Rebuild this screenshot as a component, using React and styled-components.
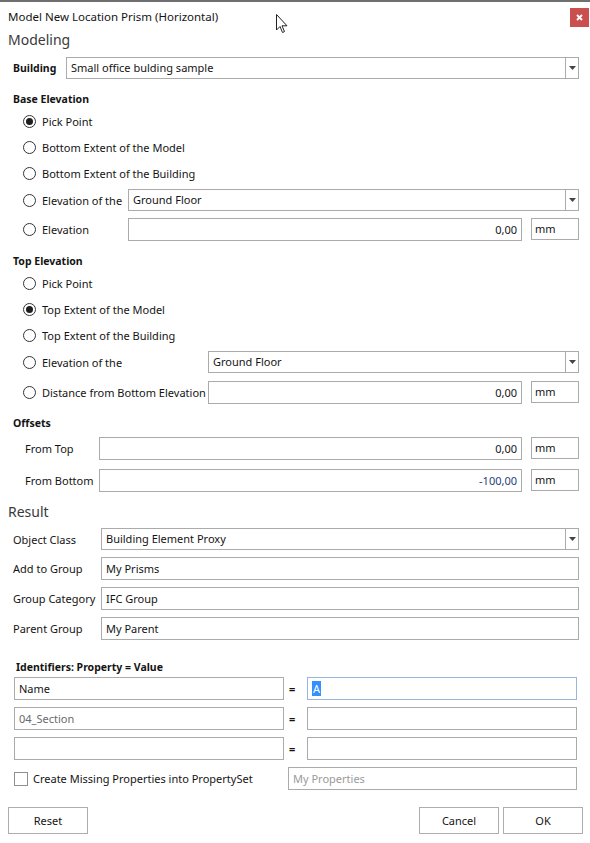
import React from "react";
import styled, { createGlobalStyle } from "styled-components";

const GlobalStyle = createGlobalStyle`
	html, body {
		margin: 0;
		padding: 0;
		background: #ffffff;
	}
	body {
		font-family: "Segoe UI", "Noto Sans", "Open Sans", sans-serif;
		font-size: 11px;
		color: #141414;
	}
`;

const Dialog = styled.div`
	position: relative;
	width: 590px;
	height: 843px;
	background: #ffffff;
	overflow: hidden;
	white-space: nowrap;
`;

const TopStrip = styled.div`
	height: 2px;
	background: #6f6f6f;
`;

const TitleBar = styled.div`
	height: 28px;
	display: flex;
	justify-content: space-between;
	align-items: center;
	padding-left: 8px;
	padding-right: 1px;
`;

const Title = styled.div`
	font-size: 11.5px;
`;

const Cursor = styled.svg`
	position: absolute;
	left: 276px;
	top: 14px;
`;

const CloseButton = styled.div`
	width: 19px;
	height: 19px;
	align-self: flex-start;
	margin-top: 6px;
	background: #c9504f;
	display: flex;
	align-items: center;
	justify-content: center;
`;

const GroupTitle = styled.div`
	height: 20px;
	line-height: 20px;
	padding-left: 8px;
	font-size: 14px;
	color: #3a3a3a;
	margin-top: ${(p) => p.$mt || 0}px;
`;

const Heading = styled.div`
	height: 18px;
	line-height: 18px;
	padding-left: ${(p) => p.$left || 13}px;
	font-weight: 700;
	font-size: 10.5px;
	margin-top: ${(p) => p.$mt || 0}px;
`;

const BuildingRow = styled.div`
	display: flex;
	align-items: center;
	height: 22px;
	margin-top: 7px;
	padding: 0 11px 0 13px;
	gap: 9px;
`;

const BoldLabel = styled.span`
	font-weight: 700;
	font-size: 10.5px;
	width: 44px;
`;

const SelectBox = styled.div`
	flex: 1;
	height: 22px;
	box-sizing: border-box;
	border: 1px solid #ababab;
	display: flex;
	background: #ffffff;
`;

const SelectText = styled.div`
	flex: 1;
	padding-left: 4px;
	line-height: 20px;
	overflow: hidden;
`;

const ArrowCell = styled.div`
	width: 12px;
	border-left: 1px solid #ababab;
	display: flex;
	align-items: center;
	justify-content: center;
`;

const TextBox = styled.div`
	flex: 1;
	height: 23px;
	box-sizing: border-box;
	border: 1px solid ${(p) => (p.$focus ? "#99b5da" : "#ababab")};
	padding: 0 4px;
	line-height: 21px;
	text-align: ${(p) => p.$align || "left"};
	color: ${(p) => p.$color || "#141414"};
	overflow: hidden;
	${(p) => (p.$width ? `flex: none; width: ${p.$width}px;` : "")}
`;

const UnitBox = styled.div`
	width: 48px;
	height: 22px;
	box-sizing: border-box;
	border: 1px solid #ababab;
	padding-left: 3px;
	line-height: 20px;
`;

const RadioGroup = styled.div`
	padding: 0 11px 0 23px;
	display: flex;
	flex-direction: column;
`;

const RadioRow = styled.div`
	height: ${(p) => p.$h || 26}px;
	display: grid;
	grid-template-columns: ${(p) => p.$labelCol || 105}px 1fr;
	align-items: center;
`;

const RadioLabel = styled.label`
	display: flex;
	align-items: center;
	gap: 6px;
`;

const RadioDot = styled.span`
	flex-shrink: 0;
	width: 13px;
	height: 13px;
	box-sizing: border-box;
	border: 1px solid #333333;
	border-radius: 50%;
	display: flex;
	align-items: center;
	justify-content: center;
	&::after {
		content: "";
		width: 7px;
		height: 7px;
		border-radius: 50%;
		background: ${(p) => (p.$on ? "#1e1e1e" : "transparent")};
	}
`;

const FieldWithUnit = styled.div`
	display: flex;
	align-items: center;
	gap: 9px;
`;

const OffsetGrid = styled.div`
	padding: 0 11px 0 25px;
	display: flex;
	flex-direction: column;
`;

const OffsetRow = styled.div`
	height: 32px;
	display: grid;
	grid-template-columns: 74px 1fr;
	align-items: center;
`;

const ResultGrid = styled.div`
	margin-top: 6px;
	padding: 0 11px 0 13px;
	display: grid;
	grid-template-columns: 88px 1fr;
	row-gap: 7px;
	align-items: center;
`;

const IdGrid = styled.div`
	margin-top: 1px;
	padding: 0 13px 0 14px;
	display: grid;
	grid-template-columns: 1fr 23px 1fr;
	row-gap: 7px;
	align-items: center;
`;

const Equals = styled.span`
	padding-left: 5px;
	font-weight: 700;
`;

const Highlight = styled.span`
	background: #3390ff;
	color: #ffffff;
	padding: 0 1px;
`;

const CheckRow = styled.div`
	margin-top: 7px;
	padding: 0 13px 0 14px;
	display: flex;
	align-items: center;
	height: 23px;
`;

const CheckBox = styled.span`
	flex-shrink: 0;
	width: 14px;
	height: 14px;
	box-sizing: border-box;
	border: 1px solid #8f8f8f;
	margin-right: 5px;
`;

const CheckLabel = styled.span`
	flex: 1;
`;

const ButtonBar = styled.div`
	margin-top: 17px;
	padding: 0 7px 0 8px;
	display: flex;
	align-items: center;
	gap: 4px;
`;

const Button = styled.div`
	width: 80px;
	height: 27px;
	box-sizing: border-box;
	border: 1px solid #adadad;
	display: flex;
	align-items: center;
	justify-content: center;
	background: #ffffff;
	${(p) => (p.$push ? "margin-left: auto;" : "")}
`;

const Arrow = () => (
	<svg width="7" height="4" viewBox="0 0 7 4">
		<polygon points="0,0 7,0 3.5,4" fill="#444" />
	</svg>
);

const Select = ({ value }) => (
	<SelectBox>
		<SelectText>{value}</SelectText>
		<ArrowCell>
			<Arrow />
		</ArrowCell>
	</SelectBox>
);

const Radio = ({ on, children }) => (
	<RadioLabel>
		<RadioDot $on={on} />
		{children}
	</RadioLabel>
);

const NumberField = ({ value, color }) => (
	<FieldWithUnit>
		<TextBox $align="right" $color={color}>
			{value}
		</TextBox>
		<UnitBox>mm</UnitBox>
	</FieldWithUnit>
);

export default function App() {
	return (
		<Dialog>
			<GlobalStyle />
			<TopStrip />
			<TitleBar>
				<Title>Model New Location Prism (Horizontal)</Title>
				<CloseButton>
					<svg width="7" height="7" viewBox="0 0 7 7">
						<path d="M1 1 L6 6 M6 1 L1 6" stroke="#fff" strokeWidth="1.8" />
					</svg>
				</CloseButton>
			</TitleBar>
			{/* mouse pointer caught in the screenshot */}
			<Cursor width="13" height="20" viewBox="0 0 13 20">
				<path
					d="M0.5 0.5 L0.5 16 L4 12.5 L6.5 18.5 L8.5 17.6 L6 11.8 L11 11.8 Z"
					fill="#fff"
					stroke="#222"
					strokeWidth="1"
					strokeLinejoin="miter"
				/>
			</Cursor>

			<GroupTitle>Modeling</GroupTitle>
			<BuildingRow>
				<BoldLabel>Building</BoldLabel>
				<Select value="Small office bulding sample" />
			</BuildingRow>

			<Heading $mt={11}>Base Elevation</Heading>
			<RadioGroup>
				<RadioRow>
					<Radio on>Pick Point</Radio>
				</RadioRow>
				<RadioRow>
					<Radio>Bottom Extent of the Model</Radio>
				</RadioRow>
				<RadioRow>
					<Radio>Bottom Extent of the Building</Radio>
				</RadioRow>
				<RadioRow $h={28}>
					<Radio>Elevation of the</Radio>
					<Select value="Ground Floor" />
				</RadioRow>
				<RadioRow $h={30}>
					<Radio>Elevation</Radio>
					<NumberField value="0,00" />
				</RadioRow>
			</RadioGroup>

			<Heading $mt={8}>Top Elevation</Heading>
			<RadioGroup>
				<RadioRow $labelCol={185}>
					<Radio>Pick Point</Radio>
				</RadioRow>
				<RadioRow $labelCol={185}>
					<Radio on>Top Extent of the Model</Radio>
				</RadioRow>
				<RadioRow $labelCol={185}>
					<Radio>Top Extent of the Building</Radio>
				</RadioRow>
				<RadioRow $labelCol={185} $h={28}>
					<Radio>Elevation of the</Radio>
					<Select value="Ground Floor" />
				</RadioRow>
				<RadioRow $labelCol={185} $h={32}>
					<Radio>Distance from Bottom Elevation</Radio>
					<NumberField value="0,00" />
				</RadioRow>
			</RadioGroup>

			<Heading $mt={6}>Offsets</Heading>
			<OffsetGrid>
				<OffsetRow>
					<span>From Top</span>
					<NumberField value="0,00" />
				</OffsetRow>
				<OffsetRow>
					<span>From Bottom</span>
					<NumberField value="-100,00" color="#1f3f7a" />
				</OffsetRow>
			</OffsetGrid>

			<GroupTitle $mt={6}>Result</GroupTitle>
			<ResultGrid>
				<span>Object Class</span>
				<Select value="Building Element Proxy" />
				<span>Add to Group</span>
				<TextBox>My Prisms</TextBox>
				<span>Group Category</span>
				<TextBox>IFC Group</TextBox>
				<span>Parent Group</span>
				<TextBox>My Parent</TextBox>
			</ResultGrid>

			<Heading $mt={18} $left={16}>
				Identifiers: Property = Value
			</Heading>
			<IdGrid>
				<TextBox>Name</TextBox>
				<Equals>=</Equals>
				<TextBox $focus>
					<Highlight>A</Highlight>
				</TextBox>
				<TextBox $color="#6a6a6a">04_Section</TextBox>
				<Equals>=</Equals>
				<TextBox />
				<TextBox />
				<Equals>=</Equals>
				<TextBox />
			</IdGrid>
			<CheckRow>
				<CheckBox />
				<CheckLabel>Create Missing Properties into PropertySet</CheckLabel>
				<TextBox $width={289} $color="#9a9a9a">
					My Properties
				</TextBox>
			</CheckRow>

			<ButtonBar>
				<Button>Reset</Button>
				<Button $push>Cancel</Button>
				<Button>OK</Button>
			</ButtonBar>
		</Dialog>
	);
}
